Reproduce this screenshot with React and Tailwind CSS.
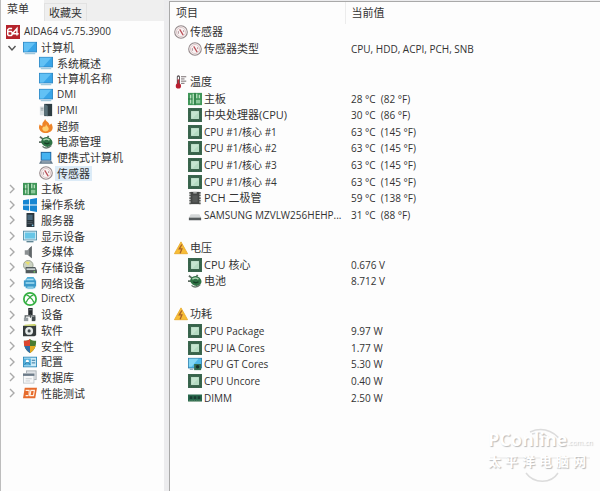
import { useState } from 'react';
import clsx from 'clsx';

function Svg({ children }) {
  return (
    <svg viewBox="0 0 16 16" className="w-[14px] h-[14px] shrink-0" aria-hidden="true">
      {children}
    </svg>
  );
}

const ICONS = {
  logo: (
    <>
      <rect width="16" height="16" fill="#b5232b" />
      <path d="M7 4H3.500L2 5.500V11l1 1h3l1-1V8.500L6 7.500H2.500M12.500 12V4L8.500 8.500V10H14.500" fill="none" stroke="#fff" strokeWidth="1.700" />
    </>
  ),
  monitor: (
    <>
      <rect x="0.500" y="1.500" width="15" height="11" fill="#39a5e8" stroke="#2a86c4" />
      <path d="M1 2h13L5 12H1z" fill="#62c1f5" />
      <path d="M2 14.500h12" stroke="#7cb4cf" strokeWidth="1" />
    </>
  ),
  server: (
    <>
      <rect x="1" y="4" width="7" height="10" fill="#d9e0e2" />
      <path d="M6 1h9v14H6z" fill="#2d3d42" />
      <path d="M6 1l4 2v12l-4-1z" fill="#587078" />
      <path d="M2 6h3M2 8h3" stroke="#8b999e" />
    </>
  ),
  flame: (
    <>
      <path d="M7 0c1 3 5 4 5 7l2-2c4 6 0 11-6 11S-2 11 1 6c1 2 2 2 3 1C3 4 6 3 7 0z" fill="#ee8428" />
      <path d="M8 5c0 3 4 4 3 7-1 3-6 3-7 0-1-2 1-3 2-4 0 2 2 1 2-3z" fill="#ffd070" />
    </>
  ),
  power: (
    <>
      <path d="M1 2l4 3M0 8h4M11 1l-2 3" stroke="#5c6b60" strokeWidth="2" />
      <ellipse cx="9" cy="8" rx="6.500" ry="5.500" transform="rotate(20 9 8)" fill="#2f7345" />
      <path d="M5 6c2-2 5-2 7 0" stroke="#b2d7b7" strokeWidth="1.800" fill="none" />
      <path d="M6 9l3 1 3-1" stroke="#173f27" strokeWidth="1.500" fill="none" />
      <path d="M4 13c3 3 7 2 10-1" stroke="#65766a" strokeWidth="1.500" fill="none" />
    </>
  ),
  laptop: (
    <>
      <rect x="2" y="1" width="12" height="10" fill="#1f5f99" />
      <rect x="3" y="2" width="10" height="8" fill="#45b3f1" />
      <path d="M2 11h12l2 3.500H0z" fill="#63788a" />
      <path d="M3 12.500h10" stroke="#b9c7d1" />
    </>
  ),
  gauge: (
    <>
      <circle cx="8" cy="8" r="7.200" fill="#f8f3f3" stroke="#94888a" strokeWidth="1.200" />
      <circle cx="8" cy="8" r="5.200" fill="none" stroke="#dcc4c6" strokeWidth="1" />
      <path d="M6.500 5l4 6.500" stroke="#ba4c55" strokeWidth="1.400" />
      <path d="M5 10V7M11 6v2" stroke="#a5868b" />
    </>
  ),
  board: (
    <>
      <rect y="1" width="16" height="14" fill="#3f9658" />
      <path d="M3 3v10M6 2v12M10 2v5M13 3v4" stroke="#b8e2be" strokeWidth="1.500" />
      <rect x="9" y="9" width="5" height="4" fill="#8cc99a" />
      <path d="M8 1v14M0 8h5" stroke="#26713f" />
    </>
  ),
  windows: (
    <path d="M0 2.500l7-1v6H0zM8 1.300L16 0v7.500H8zM0 8.500h7v6l-7-1zM8 8.500h8V16l-8-1.300z" fill="#1686d2" />
  ),
  tower: (
    <>
      <rect x="4" y="0" width="9" height="16" fill="#28343c" />
      <rect x="5" y="2" width="6" height="6" fill="#47677c" />
      <path d="M5 10h6M5 12h6" stroke="#536069" />
      <circle cx="11" cy="14" r="1" fill="#83c9e8" />
    </>
  ),
  display: (
    <>
      <rect x="0.500" y="2.500" width="15" height="10" fill="#e2f2f7" stroke="#4d8ca7" />
      <rect x="2" y="4" width="12" height="7" fill="#66c6e7" />
      <path d="M4 14.500h8" stroke="#5a8291" strokeWidth="1.500" />
    </>
  ),
  speaker: (
    <>
      <path d="M2 6h3l5-5v14l-5-4H2z" fill="#8b9092" />
      <path d="M7 4l3-3v14l-3-3z" fill="#606668" />
    </>
  ),
  storage: (
    <>
      <circle cx="6" cy="6" r="5.500" fill="#ccd3c2" stroke="#959d8e" />
      <path d="M6 6L2 2h6z" fill="#e8df6d" />
      <path d="M3 8h11l2 4v3H3z" fill="#515a5c" />
      <path d="M4 10.500h10" stroke="#c9d0d0" strokeWidth="2" />
      <circle cx="13" cy="13.500" r="1" fill="#72c45e" />
    </>
  ),
  network: (
    <>
      <path d="M3 4l2-3h7l2 3v10H3z" fill="#4caad4" />
      <path d="M1 5h14v7H1z" fill="#3a98c8" />
      <path d="M4 4h8M3 8h10" stroke="#a7def2" strokeWidth="1.500" />
      <path d="M5 12h7v3H5z" fill="#8ccbe4" />
    </>
  ),
  xbox: (
    <>
      <circle cx="8" cy="8" r="7" fill="#fff" stroke="#35b042" strokeWidth="2" />
      <path d="M3.500 12c1-3 2.500-4.500 4.500-6 2 1.500 3.500 3 4.500 6M4 4c2-.500 3 .500 4 2 1-1.500 2-2.500 4-2" fill="none" stroke="#35a842" strokeWidth="1.500" />
    </>
  ),
  devices: (
    <>
      <rect x="6" y="0" width="5" height="8" fill="#272c2f" />
      <path d="M8.500 7v4M2.500 14V9h11v5" stroke="#535a5c" strokeWidth="1.300" fill="none" />
      <rect x="1" y="11" width="5" height="4" fill="#959da0" />
      <rect x="10" y="10" width="4" height="5" fill="#444c50" />
      <path d="M7 2h3" stroke="#94a0a4" />
    </>
  ),
  software: (
    <>
      <path d="M0 3h13l2-1v12l-2 1H0z" fill="#363c3d" />
      <path d="M2 2l12-1 1 2H1z" fill="#c6cf5c" />
      <circle cx="7" cy="9" r="4.500" fill="#e7ebea" />
      <circle cx="7" cy="9" r="1.800" fill="#434b4e" />
    </>
  ),
  shield: (
    <>
      <path d="M8 0c2 2 4 2 7 2 0 7-2 11-7 14C3 13 1 9 1 2c3 0 5 0 7-2z" fill="#497b30" />
      <path d="M8 0v8H1.500C1 6 1 4 1 2c3 0 5 0 7-2z" fill="#dc4630" />
      <path d="M8 8h6.500C13 12 11 14 8 16z" fill="#e4aa20" />
      <path d="M8 8v8c-3-2-5-4-6.500-8z" fill="#2f6da8" />
    </>
  ),
  config: (
    <>
      <rect x="0.500" y="2.500" width="15" height="11" fill="#cbeaf7" stroke="#2786b9" />
      <path d="M1 4h8v8H1z" fill="#55b3df" />
      <circle cx="5" cy="7" r="1.700" fill="#fff" />
      <path d="M2 11c1-3 5-3 6 0M10 6h4M10 9h4" stroke="#216895" fill="none" />
    </>
  ),
  database: (
    <>
      <rect x="4" y="1" width="11" height="10" fill="#dfe3e7" stroke="#a5acb2" />
      <rect x="0.500" y="4" width="12" height="11" fill="#f7f8f9" stroke="#c0c6ca" />
      <path d="M0 5.500h13" stroke="#6c7b89" strokeWidth="2.500" />
      <path d="M3 10h7M3 12.500h5" stroke="#c3c8cc" />
    </>
  ),
  benchmark: (
    <>
      <path d="M2 2h14l-2 12H0z" fill="#e66b2c" />
      <path d="M3 5h4v6M9 5h4l-1 6H8zM3 11h3" fill="none" stroke="#fff0e2" strokeWidth="1.300" />
    </>
  ),
  thermometer: (
    <>
      <path d="M5 2v10" stroke="#52484b" strokeWidth="3.500" strokeLinecap="round" />
      <path d="M5 2v4" stroke="#fff" strokeWidth="1.500" />
      <path d="M5 5v6" stroke="#c52b38" strokeWidth="1.800" />
      <circle cx="5" cy="12.500" r="3" fill="#b91e30" />
      <path d="M8 2h6M8 4.500h4M8 7h6M8 9.500h4" stroke="#65595d" />
    </>
  ),
  chip: (
    <>
      <rect width="16" height="16" fill="#3d6850" />
      <rect x="1.500" y="1.500" width="13" height="13" fill="none" stroke="#2f5b43" strokeDasharray="1 1" />
      <rect x="3.500" y="3.500" width="9" height="9" fill="#c5e5d0" />
      <path d="M5 12L12 5v7z" fill="#b3dbc1" />
    </>
  ),
  pch: (
    <>
      <path d="M3 1h10v14H3z" fill="#454746" />
      <path d="M1.500 2h2M1.500 5h2M1.500 8h2M1.500 11h2M1.500 14h2M12.500 2h2M12.500 5h2M12.500 8h2M12.500 11h2M12.500 14h2" stroke="#555856" strokeWidth="2" />
      <path d="M6 1h4v2H6z" fill="#a3a5a4" />
      <path d="M5 5h6v8H5z" fill="#565958" />
    </>
  ),
  drive: (
    <>
      <path d="M3 7h10l2 4H1z" fill="#d3d6d7" />
      <rect x="1" y="11" width="14" height="3" fill="#555a5c" />
    </>
  ),
  warning: (
    <>
      <path d="M8 1l7.500 13.500H.500z" fill="#f8bd36" stroke="#e9ab2c" strokeLinejoin="round" />
      <path d="M9 4L6 9h3l-2 5" fill="none" stroke="#a8622a" strokeWidth="1.500" />
    </>
  ),
  gpu: (
    <>
      <rect x="0.500" y="1.500" width="15" height="11" fill="#4eb8e8" stroke="#3282ae" />
      <path d="M1 2h11L4 11H1z" fill="#84d7f5" />
      <rect x="7" y="8" width="8" height="7" fill="#346e53" />
      <circle cx="11" cy="11" r="2" fill="#182e2b" />
      <path d="M2 14h4" stroke="#638d9c" />
    </>
  ),
  dimm: (
    <>
      <rect y="4" width="16" height="8" fill="#29684d" />
      <path d="M2 6h3v3H2zM6.500 6h3v3h-3zM11 6h3v3h-3z" fill="#173b31" />
      <path d="M1 11.500h14" stroke="#8ba985" strokeDasharray="1 1" />
    </>
  ),
};

const TREE = [
  { level: 0, icon: 'logo', label: 'AIDA64 v5.75.3900' },
  { level: 1, icon: 'monitor', label: '计算机', open: true },
  { level: 2, icon: 'monitor', label: '系统概述' },
  { level: 2, icon: 'monitor', label: '计算机名称' },
  { level: 2, icon: 'monitor', label: 'DMI' },
  { level: 2, icon: 'server', label: 'IPMI' },
  { level: 2, icon: 'flame', label: '超频' },
  { level: 2, icon: 'power', label: '电源管理' },
  { level: 2, icon: 'laptop', label: '便携式计算机' },
  { level: 2, icon: 'gauge', label: '传感器' },
  { level: 1, icon: 'board', label: '主板' },
  { level: 1, icon: 'windows', label: '操作系统' },
  { level: 1, icon: 'tower', label: '服务器' },
  { level: 1, icon: 'display', label: '显示设备' },
  { level: 1, icon: 'speaker', label: '多媒体' },
  { level: 1, icon: 'storage', label: '存储设备' },
  { level: 1, icon: 'network', label: '网络设备' },
  { level: 1, icon: 'xbox', label: 'DirectX' },
  { level: 1, icon: 'devices', label: '设备' },
  { level: 1, icon: 'software', label: '软件' },
  { level: 1, icon: 'shield', label: '安全性' },
  { level: 1, icon: 'config', label: '配置' },
  { level: 1, icon: 'database', label: '数据库' },
  { level: 1, icon: 'benchmark', label: '性能测试' },
];

// null = blank row between groups
const ROWS = [
  { icon: 'gauge', label: '传感器', group: true },
  { icon: 'gauge', label: '传感器类型', value: 'CPU, HDD, ACPI, PCH, SNB' },
  null,
  { icon: 'thermometer', label: '温度', group: true },
  { icon: 'board', label: '主板', value: '28 °C  (82 °F)' },
  { icon: 'chip', label: '中央处理器(CPU)', value: '30 °C  (86 °F)' },
  { icon: 'chip', label: 'CPU #1/核心 #1', value: '63 °C  (145 °F)' },
  { icon: 'chip', label: 'CPU #1/核心 #2', value: '63 °C  (145 °F)' },
  { icon: 'chip', label: 'CPU #1/核心 #3', value: '63 °C  (145 °F)' },
  { icon: 'chip', label: 'CPU #1/核心 #4', value: '63 °C  (145 °F)' },
  { icon: 'pch', label: 'PCH 二极管', value: '59 °C  (138 °F)' },
  { icon: 'drive', label: 'SAMSUNG MZVLW256HEHP...', value: '31 °C  (88 °F)' },
  null,
  { icon: 'warning', label: '电压', group: true },
  { icon: 'chip', label: 'CPU 核心', value: '0.676 V' },
  { icon: 'power', label: '电池', value: '8.712 V' },
  null,
  { icon: 'warning', label: '功耗', group: true },
  { icon: 'chip', label: 'CPU Package', value: '9.97 W' },
  { icon: 'chip', label: 'CPU IA Cores', value: '1.77 W' },
  { icon: 'gpu', label: 'CPU GT Cores', value: '5.30 W' },
  { icon: 'chip', label: 'CPU Uncore', value: '0.40 W' },
  { icon: 'dimm', label: 'DIMM', value: '2.50 W' },
];

// mostly-latin labels are set one step smaller than the Chinese ones
const labelSize = label => (/^[ -~]+$/.test(label) || label.includes('#') ? 'text-[10px]' : 'text-[11px]');

function Chevron({ open }) {
  return (
    <svg viewBox="0 0 10 10" className="w-[10px] h-[10px]" aria-hidden="true">
      <path
        d={open ? 'M1.500 3l3.500 4 3.500-4' : 'M3 1l4 4-4 4'}
        fill="none"
        stroke={open ? '#555' : '#aaa'}
        strokeWidth="1.400"
      />
    </svg>
  );
}

function TreeRow({ item, selected, onSelect }) {
  return (
    <li
      className={clsx(
        'flex items-center min-h-0',
        item.level === 0 && 'pl-[5px]',
        item.level === 1 && 'pl-[6px]',
        item.level === 2 && 'pl-[38px]'
      )}
    >
      {item.level === 1 && (
        <button type="button" aria-label={item.label} aria-expanded={!!item.open} className="w-4">
          <Chevron open={item.open} />
        </button>
      )}
      <Svg>{ICONS[item.icon]}</Svg>
      <button
        type="button"
        onClick={onSelect}
        className={clsx(
          'ml-0.5 px-0.5 h-[15px] leading-[15px] whitespace-nowrap',
          labelSize(item.label),
          selected && 'bg-[#dcebf7]'
        )}
      >
        {item.label}
      </button>
    </li>
  );
}

function Watermark() {
  return (
    <div className="absolute right-2 bottom-2 w-[104px] text-white [text-shadow:1px_1px_1px_#bbb] pointer-events-none select-none">
      <svg viewBox="0 0 104 56" className="absolute inset-x-0 bottom-0 w-full" fill="none" stroke="#dcdcdc" aria-hidden="true">
        <path d="M42 5c14-6 28 0 33 14M44 7c8-2 12-1 17 4l-10 1" strokeWidth="1.500" />
        <path d="M38 46c8 11 25 11 32 0" strokeWidth="1.500" />
        <path d="M2 31h100" strokeWidth="0.700" />
      </svg>
      <div className="relative flex items-end justify-between leading-6">
        <span className="text-[18px] font-bold">PConline</span>
        <span className="text-[7px] leading-4">.com.cn</span>
      </div>
      <p className="relative pb-3 text-[13px] leading-5 tracking-[4px] font-bold whitespace-nowrap">太平洋电脑网</p>
    </div>
  );
}

export default function App() {
  const [tab, setTab] = useState('菜单');
  const [selected, setSelected] = useState('传感器');

  return (
    <div className="relative flex min-h-screen bg-[#ececee] text-[11px] text-[#333] font-['Open_Sans','Noto_Sans_CJK_SC',sans-serif]">
      <aside className="w-[164px] shrink-0 bg-[#fdfdfd] border-l border-[#bdbdbd]">
        <div role="tablist" className="flex items-end h-[21px] bg-[#efefef]">
          {['菜单', '收藏夹'].map(name => (
            <button
              key={name}
              type="button"
              role="tab"
              aria-selected={tab === name}
              onClick={() => setTab(name)}
              className={clsx(
                'leading-4',
                tab === name ? 'h-[21px] pl-1.5 pr-[15px] pb-1 bg-[#fdfdfd]' : 'h-[18px] px-1 border border-b-0 border-[#e2e2e2]'
              )}
            >
              {name}
            </button>
          ))}
        </div>
        <ul className="grid auto-rows-fr h-[377px] mt-[3px]">
          {TREE.map(item => (
            <TreeRow
              key={item.label}
              item={item}
              selected={selected === item.label}
              onSelect={() => setSelected(item.label)}
            />
          ))}
        </ul>
      </aside>

      <main className="flex-1 ml-[5px] mt-px bg-[#fdfdfd] border-l border-t border-[#a9a9a9]">
        <table className="w-full table-fixed border-collapse h-[404px]">
          <thead>
            <tr className="h-[22px] text-left">
              <th className="w-[175px] p-0 pl-1.5 font-normal border-r border-[#ececec]">项目</th>
              <th className="p-0 pl-1.5 font-normal">当前值</th>
            </tr>
          </thead>
          <tbody>
            {ROWS.map((row, i) => (
              <tr key={i} className="h-4 leading-4">
                <td className="p-0">
                  {row && (
                    <div className={clsx('flex items-center gap-0.5 whitespace-nowrap', row.group ? 'pl-1' : 'pl-[18px]')}>
                      <Svg>{ICONS[row.icon]}</Svg>
                      <span className={labelSize(row.label)}>{row.label}</span>
                    </div>
                  )}
                </td>
                <td className="p-0 pl-1.5 text-[10px] whitespace-pre">{row?.value}</td>
              </tr>
            ))}
          </tbody>
        </table>
      </main>

      <Watermark />
    </div>
  );
}
